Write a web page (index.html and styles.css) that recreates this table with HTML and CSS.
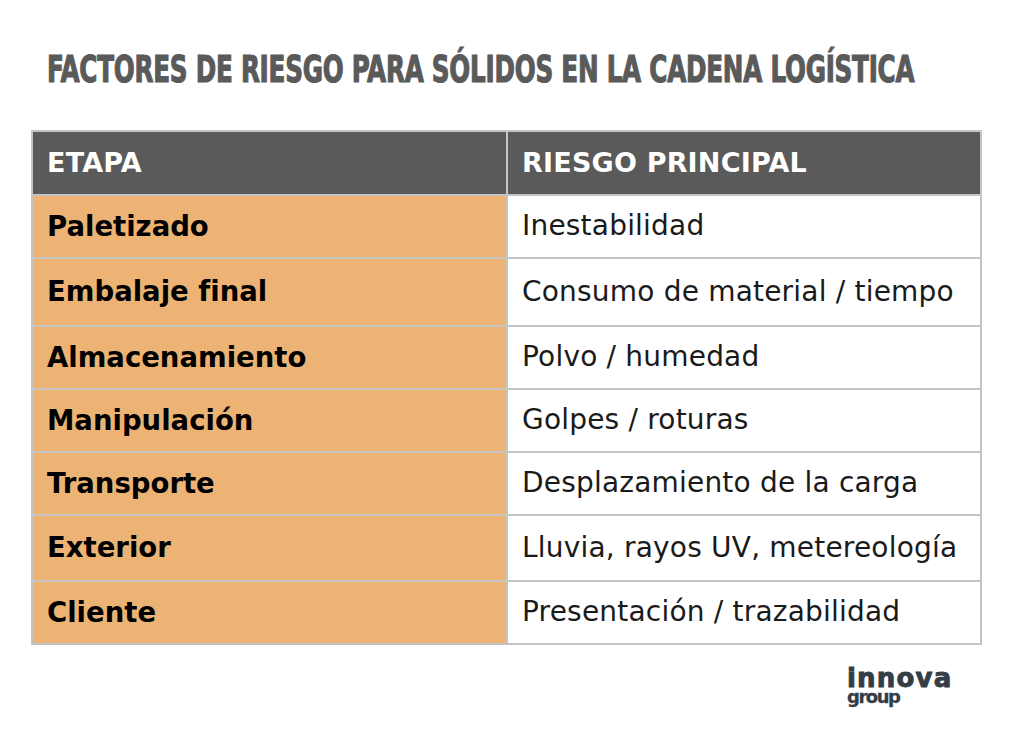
FILE: index.html
```html
<!DOCTYPE html>
<html lang="es">
<head>
<meta charset="utf-8">
<title>Factores de riesgo</title>
<link rel="stylesheet" href="styles.css">
</head>
<body>
<div class="page">
  <h1 class="title"><span class="title-inner">FACTORES DE RIESGO PARA SÓLIDOS EN LA CADENA LOGÍSTICA</span></h1>
  <table class="risk">
    <thead>
      <tr><th class="c1">ETAPA</th><th class="c2">RIESGO PRINCIPAL</th></tr>
    </thead>
    <tbody>
      <tr><td class="stage">Paletizado</td><td class="risk-cell">Inestabilidad</td></tr>
      <tr class="tall"><td class="stage">Embalaje final</td><td class="risk-cell">Consumo de material / tiempo</td></tr>
      <tr><td class="stage">Almacenamiento</td><td class="risk-cell">Polvo / humedad</td></tr>
      <tr><td class="stage">Manipulación</td><td class="risk-cell">Golpes / roturas</td></tr>
      <tr><td class="stage">Transporte</td><td class="risk-cell">Desplazamiento de la carga</td></tr>
      <tr class="mid"><td class="stage">Exterior</td><td class="risk-cell">Lluvia, rayos UV, metereología</td></tr>
      <tr><td class="stage">Cliente</td><td class="risk-cell">Presentación / trazabilidad</td></tr>
    </tbody>
  </table>
  <div class="logo">
    <div class="logo-main">innova</div>
    <div class="logo-sub">group</div>
  </div>
</div>
</body>
</html>
```
FILE: styles.css
```css
html, body {
  margin: 0;
  padding: 0;
  background: #ffffff;
}
.page {
  width: 1024px;
  height: 730px;
  position: relative;
  overflow: hidden;
  font-family: "DejaVu Sans", "Open Sans", sans-serif;
}
.title {
  margin: 0;
  padding: 51px 0 0 47px;
  height: 78px;
  box-sizing: border-box;
  font-family: "DejaVu Sans Condensed", "DejaVu Sans", sans-serif;
  font-weight: bold;
  font-size: 37px;
  line-height: 37px;
  color: #5a5a5a;
  white-space: nowrap;
}
.title-inner {
  display: inline-block;
  transform-origin: left top;
  transform: scaleX(0.74);
  letter-spacing: -0.3px;
  -webkit-text-stroke: 1.1px #5a5a5a;
}
.risk {
  margin: 52px 0 0 31px;
  width: 951px;
  border-collapse: collapse;
  border: 2px solid #c4c4c4;
}
.risk th, .risk td {
  border: 2px solid #c4c4c4;
  text-align: left;
  padding: 0 0 2px 14px;
  height: 63px;
  box-sizing: border-box;
  vertical-align: middle;
  white-space: nowrap;
}
.risk th { height: 64px; }
.risk tr.tall td { height: 68px; }
.risk tr.mid td { height: 66px; }
.risk th {
  background: #5a5a5a;
  color: #ffffff;
  font-weight: bold;
  font-size: 27px;
  letter-spacing: 0.2px;
}
.risk th.c1 { width: 475px; }
.stage {
  background: #edb374;
  color: #000000;
  font-weight: bold;
  font-size: 27.5px;
}
.risk-cell {
  color: #1a1a1a;
  font-size: 28px;
  letter-spacing: 0.2px;
}
.logo {
  position: absolute;
  left: 847px;
  top: 670px;
  color: #333d45;
  font-family: "DejaVu Sans", sans-serif;
  font-weight: bold;
}
.logo-main {
  font-size: 26px;
  line-height: 16px;
  letter-spacing: 1.2px;
  -webkit-text-stroke: 0.9px #333d45;
}
.logo-sub {
  margin-top: 3px;
  font-size: 18px;
  line-height: 16px;
  letter-spacing: -1.5px;
  -webkit-text-stroke: 0.3px #333d45;
}
```
